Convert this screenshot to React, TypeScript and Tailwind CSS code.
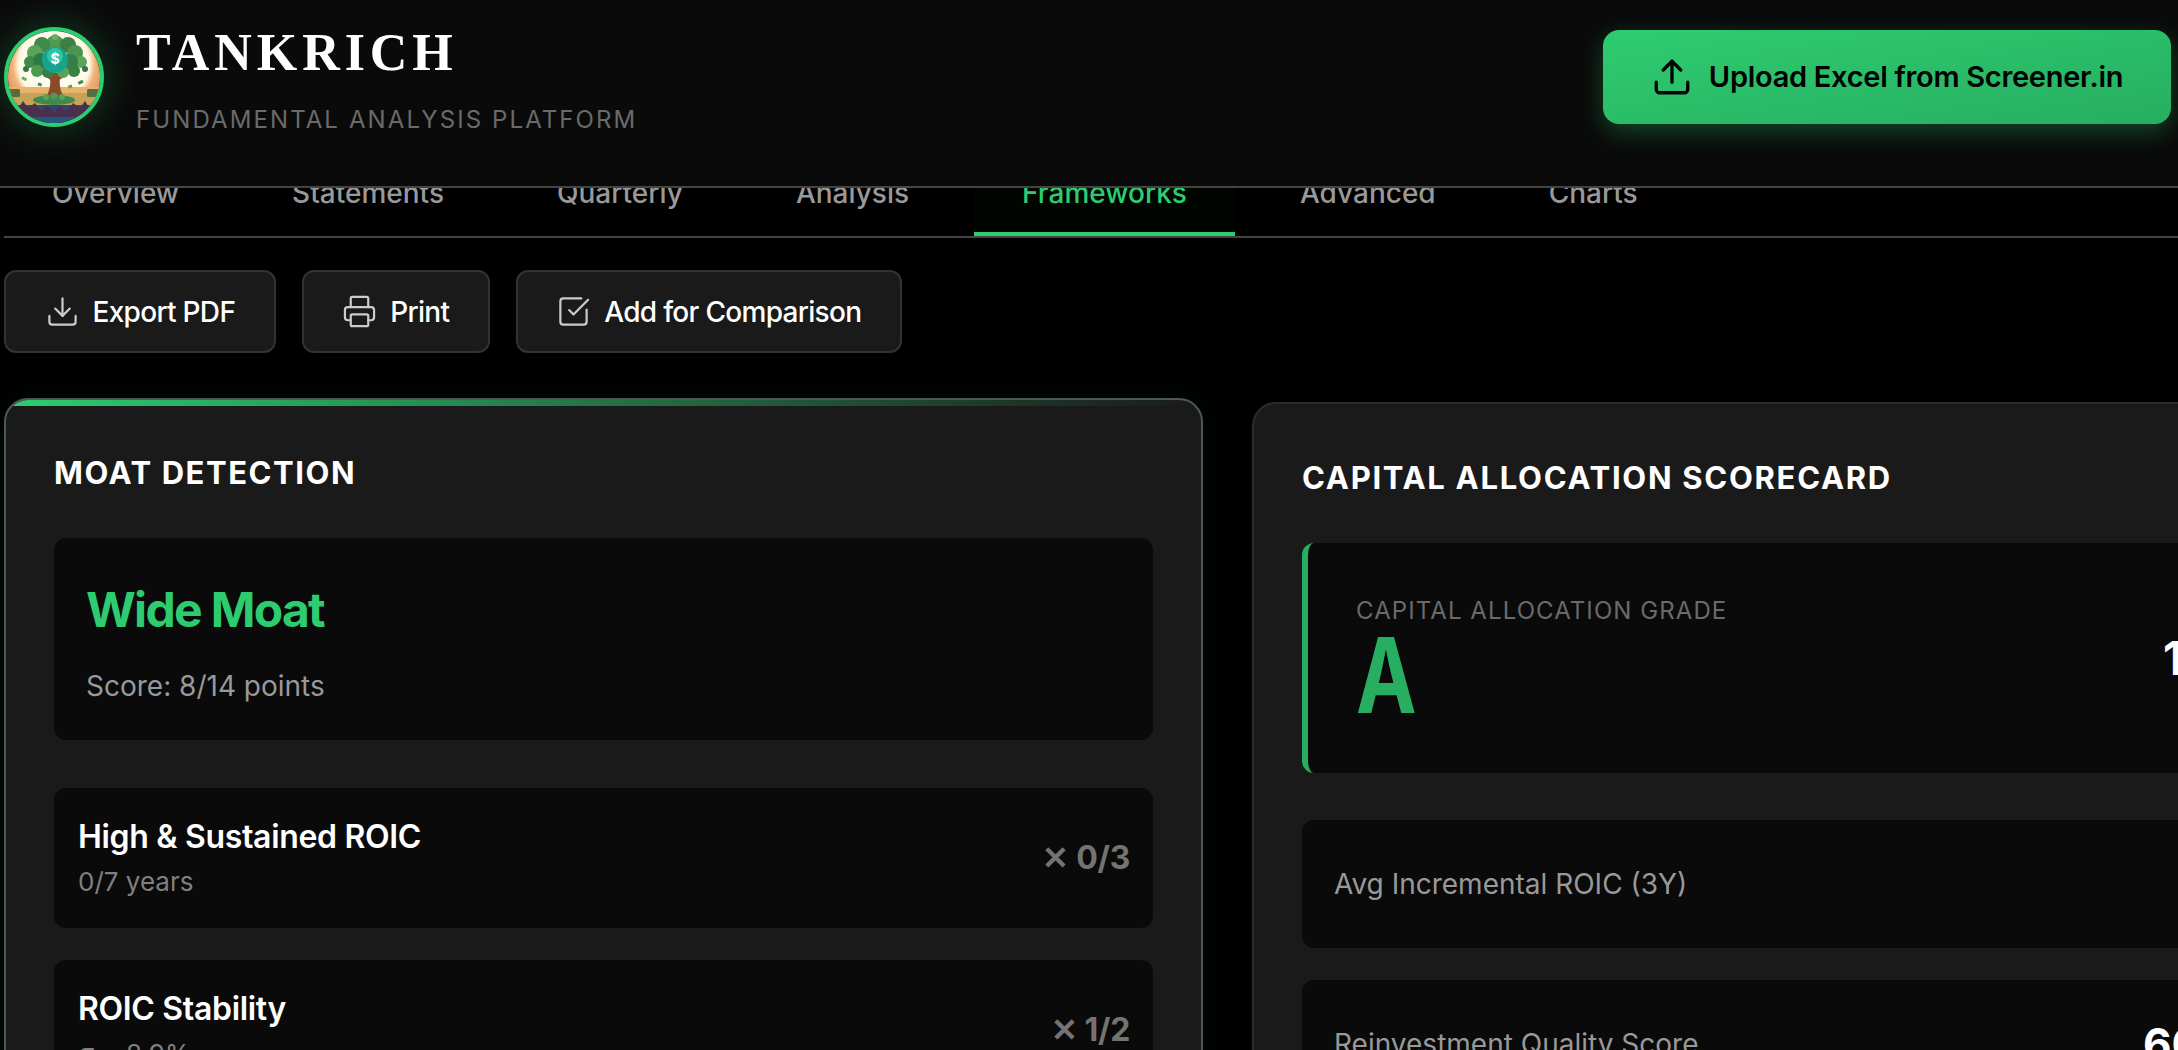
import { Download, Printer, SquareCheckBig, Upload } from 'lucide-react'

const tabs = ['Overview', 'Statements', 'Quarterly', 'Analysis', 'Frameworks', 'Advanced', 'Charts']

const canopy = [
  [47, 13, 9, '#4f9a50'], [34, 14, 8, '#3f8a4a'], [60, 14, 8, '#3a7f44'], [27, 22, 8, '#5aa358'],
  [67, 22, 8, '#4b9450'], [22, 31, 6, '#3f8a4a'], [73, 31, 6, '#5aa358'], [33, 30, 8, '#2f7a44'],
  [62, 31, 8, '#357f48'], [29, 40, 6, '#4f9a50'], [66, 40, 6, '#3a7f44'], [40, 41, 6, '#357f48'],
  [55, 41, 6, '#5aa358'], [18, 38, 3, '#2f7a44'], [77, 38, 3, '#2f7a44'], [47, 6, 3, '#6bb060'],
] as const

const Logo = () => (
  <div className="w-[100px] h-[100px] rounded-full border-[4px] border-[#2ecc71] overflow-hidden shrink-0 shadow-[0_0_40px_rgba(46,204,113,0.3)]">
    <svg viewBox="0 0 92 92" className="w-full h-full block">
      <defs>
        <radialGradient id="sky" cx="50%" cy="36%" r="62%">
          <stop offset="0%" stopColor="#ffffff" />
          <stop offset="62%" stopColor="#fff8e6" />
          <stop offset="72%" stopColor="#f2b47a" />
          <stop offset="100%" stopColor="#c9834f" />
        </radialGradient>
      </defs>
      <rect width="92" height="92" fill="url(#sky)" />
      <rect y="56" width="92" height="16" fill="#e9b36a" />
      <rect y="62" width="92" height="12" fill="#c9a25a" />
      <rect y="74" width="92" height="18" fill="#33456a" />
      <path d="M38 66 C43 58 43 50 41 42 L53 42 C51 50 51 58 56 66 Z" fill="#8a4a2c" />
      <path d="M44 48 L28 38 M50 48 L66 38" stroke="#8a4a2c" strokeWidth="3" />
      {canopy.map(([cx, cy, r, fill]) => (
        <circle key={`${cx}-${cy}`} cx={cx} cy={cy} r={r} fill={fill} />
      ))}
      <circle cx="47" cy="29" r="13" fill="#17a28c" />
      <circle cx="47" cy="25" r="8" fill="#2fc4a8" />
      <text x="47" y="33" textAnchor="middle" fontSize="14" fontWeight="700" fill="#fff" fontFamily="Inter, sans-serif">$</text>
      <rect x="14" y="46" width="5" height="3" fill="#6bb060" transform="rotate(30 16 47)" />
      <rect x="70" y="50" width="5" height="3" fill="#3f8a4a" transform="rotate(-25 72 51)" />
      <rect x="30" y="52" width="4" height="3" fill="#3f8a4a" transform="rotate(20 32 53)" />
      <rect x="60" y="54" width="4" height="3" fill="#5aa358" transform="rotate(-20 62 55)" />
      <ellipse cx="46" cy="69" rx="21" ry="5" fill="#3c8a50" />
      <circle cx="38" cy="66" r="3" fill="#5aa358" />
      <circle cx="46" cy="65" r="3.5" fill="#4f9a50" />
      <circle cx="54" cy="66" r="3" fill="#5aa358" />
      <rect x="1" y="58" width="11" height="8" rx="1.5" fill="#5a6a40" />
      <rect x="79" y="58" width="12" height="8" rx="1.5" fill="#4f7048" />
      <path d="M10 78 L15 70 L20 77 L27 72 L33 80 L40 75 L46 82 L52 75 L59 80 L65 72 L72 77 L77 70 L82 78 L82 92 L10 92 Z" fill="#4a2f4e" />
      <rect y="86" width="92" height="6" fill="#1f5a80" />
    </svg>
  </div>
)

const ActionButton = ({ icon, label }: { icon: React.ReactNode; label: string }) => (
  <button className="h-[83px] flex items-center gap-[13px] px-[38.5px] rounded-xl bg-[#1a1a1a] border-2 border-[#333] text-white text-[28px] tracking-[-0.025em] font-medium">
    <span className="text-[#ccc]">{icon}</span>
    {label}
  </button>
)

const CriterionRow = ({ name, detail, score }: { name: string; detail: string; score: string }) => (
  <div className="h-[140px] shrink-0 flex items-center justify-between pl-6 pr-[23px] rounded-xl bg-[#0a0a0a]">
    <div>
      <div className="text-[32px] leading-[48px] tracking-[-0.01em] font-semibold text-white">{name}</div>
      <div className="text-[26px] leading-[42px] text-[#808080]">{detail}</div>
    </div>
    <div className="text-[32px] tracking-[-0.01em] font-bold text-[#737373]">✕ {score}</div>
  </div>
)

const MetricRow = ({ label, value, valueClass }: { label: string; value: string; valueClass: string }) => (
  <div className="h-[128px] shrink-0 flex items-center justify-between px-8 rounded-xl bg-[#0a0a0a]">
    <span className="text-[28px] text-[#999]">{label}</span>
    <span className={`font-bold text-white text-[44px] ${valueClass}`}>{value}</span>
  </div>
)

export default function App() {
  return (
    <div className="w-[2178px] h-[1050px] overflow-hidden bg-black font-['Inter',sans-serif]">
      <header className="h-[188px] flex justify-between items-start pt-[27px] pl-1 pr-[7px] bg-[#0a0a0a] border-b-2 border-[#444]">
        <div className="flex gap-[32px]">
          <Logo />
          <div>
            <h1 className="font-['Liberation_Serif',serif] font-bold text-[52px] leading-[52px] tracking-[0.095em] text-white">
              TANKRICH
            </h1>
            <p className="mt-[26px] text-[24px] leading-[30px] tracking-[2.1px] text-[#6a6a6a]">
              FUNDAMENTAL ANALYSIS PLATFORM
            </p>
          </div>
        </div>
        <button className="mt-[3px] w-[568px] h-[94px] flex items-center justify-center gap-4 rounded-2xl bg-linear-to-br from-[#2ecc71] to-[#27ae60] text-black text-[29px] tracking-[-0.01em] font-semibold shadow-[0_8px_24px_rgba(46,204,113,0.3)]">
          <Upload size={42} strokeWidth={1.9} />
          Upload Excel from Screener.in
        </button>
      </header>

      <div className="ml-1 h-[50px] overflow-hidden border-b-2 border-[#444]">
        <nav className="flex gap-[17px] -mt-[16px]">
          {tabs.map((tab) => (
            <div
              key={tab}
              className={
                tab === 'Frameworks'
                  ? 'h-[64px] px-12 pt-[1px] text-[28px] leading-[40px] font-medium text-[#2ecc71] border-b-4 border-[#2ecc71] bg-[#000500]'
                  : 'h-[64px] px-12 pt-[1px] text-[28px] leading-[40px] font-medium text-[#999]'
              }
            >
              {tab}
            </div>
          ))}
        </nav>
      </div>

      <div className="flex gap-[26px] pl-1 pt-[32px]">
        <ActionButton icon={<Download size={35} strokeWidth={1.5} />} label="Export PDF" />
        <ActionButton icon={<Printer size={35} strokeWidth={1.5} />} label="Print" />
        <ActionButton icon={<SquareCheckBig size={35} strokeWidth={1.5} />} label="Add for Comparison" />
      </div>

      <div className="flex items-start gap-[49px] pl-1 pt-[49px]">
        <section className="relative w-[1199px] shrink-0 h-[800px] -translate-y-1 overflow-hidden rounded-3xl bg-[#1a1a1a] border-2 border-[#4d5a52] p-12 pt-[54px] shadow-[0_0_40px_rgba(46,204,113,0.06)]">
          <div className="absolute inset-x-0 top-0 h-[6px] bg-linear-to-r from-[#2ecc71] to-transparent" />
          <h2 className="text-[31px] leading-[38px] font-bold tracking-[0.05em] text-white">MOAT DETECTION</h2>
          <div className="mt-[46px] h-[202px] rounded-xl bg-[#0a0a0a] px-8 pt-[43px]">
            <div className="text-[48px] leading-[58px] tracking-[-0.035em] font-bold text-[#2ecc71]">Wide Moat</div>
            <div className="mt-[27px] text-[28px] leading-[40px] text-[#999]">Score: 8/14 points</div>
          </div>
          <div className="mt-12 flex flex-col gap-8">
            <CriterionRow name="High & Sustained ROIC" detail="0/7 years" score="0/3" />
            <CriterionRow name="ROIC Stability" detail="σ = 8.9%" score="1/2" />
          </div>
        </section>

        <section className="w-[1199px] shrink-0 h-[800px] overflow-hidden rounded-3xl bg-[#1a1a1a] border-2 border-[#2c2c2c] p-12 pt-[55px]">
          <h2 className="text-[31px] leading-[38px] font-bold tracking-[0.055em] text-white">CAPITAL ALLOCATION SCORECARD</h2>
          <div className="mt-[46px] h-[230px] flex items-center justify-between rounded-xl bg-[#0a0a0a] border-l-[6px] border-[#27ae60] pl-12 pr-12">
            <div className="pt-[10px]">
              <div className="-mb-[4px] text-[24px] leading-[28px] tracking-[0.045em] text-[#6a6a6a]">CAPITAL ALLOCATION GRADE</div>
              <div className="origin-left scale-x-[0.78] text-[104px] leading-[108px] font-bold text-[#27ae60]">A</div>
            </div>
            <div className="w-[190px] text-[46px] font-bold text-white">18.5%</div>
          </div>
          <div className="mt-[47px] flex flex-col gap-8">
            <MetricRow label="Avg Incremental ROIC (3Y)" value="28.4%" valueClass="" />
            <MetricRow label="Reinvestment Quality Score" value="60/100" valueClass="w-[226px]" />
          </div>
        </section>
      </div>
    </div>
  )
}
